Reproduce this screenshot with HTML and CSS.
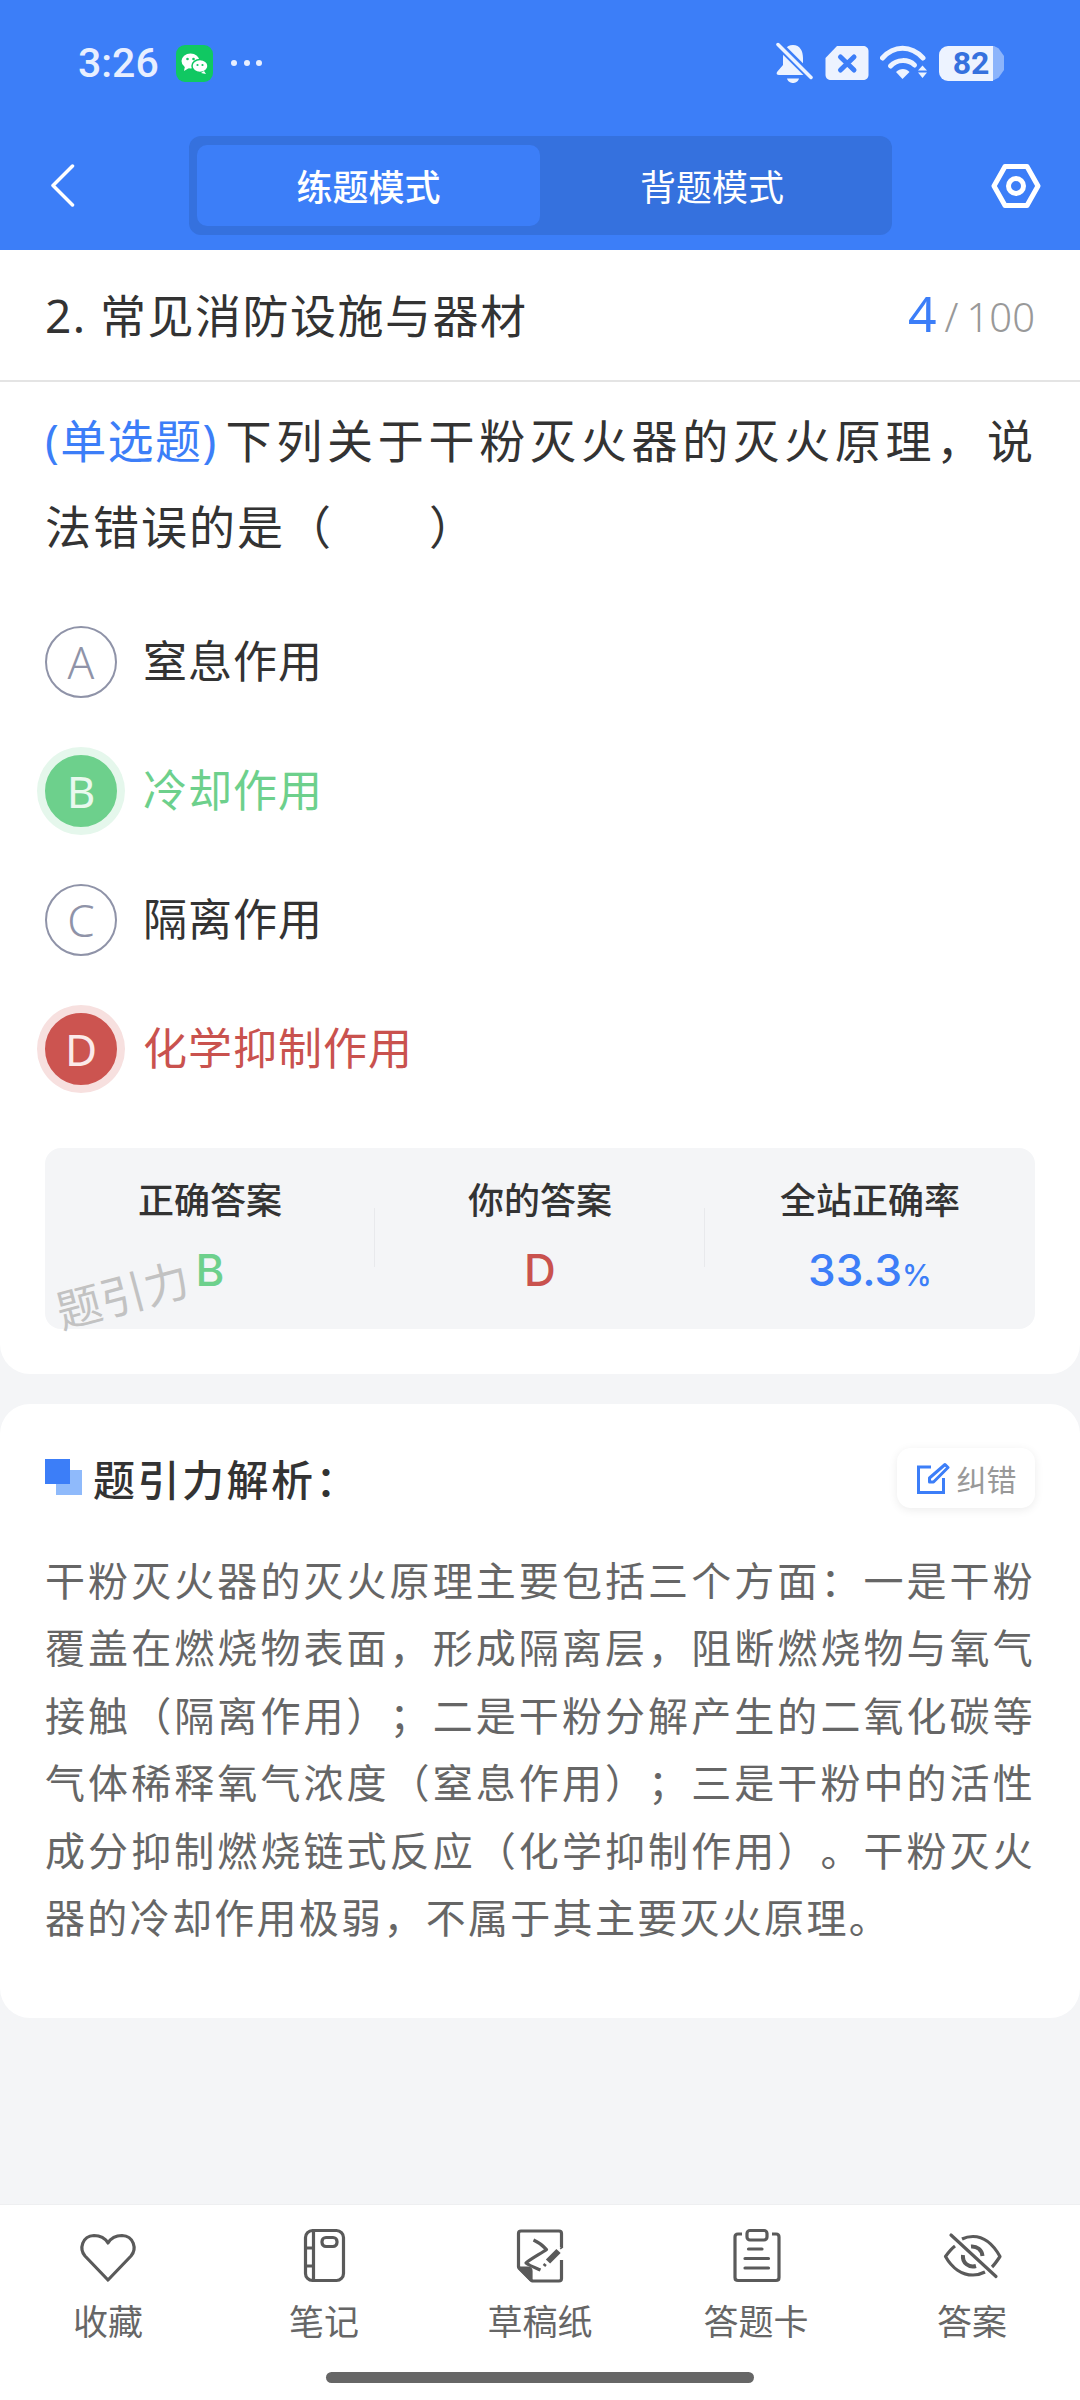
FILE: index.html
```html
<!DOCTYPE html>
<html>
<head>
    <meta charset="utf-8">
    <title>题引力</title>
    <link rel="stylesheet" href="styles.css">
</head>
<body>
    <header class="header">
        <div class="status">
            <div class="status-left">
                <span class="time">3:26</span>
                <svg class="wechat" width="37" height="37" viewBox="0 0 37 37">
                    <rect width="37" height="37" rx="9" fill="#10c862"/>
                    <ellipse cx="14.5" cy="16" rx="9" ry="7.5" fill="#fff"/>
                    <path d="M9 21l-1 5 5-3z" fill="#fff"/>
                    <ellipse cx="24" cy="21" rx="8" ry="6.5" fill="#fff" stroke="#10c862" stroke-width="1.5"/>
                    <path d="M28 26l2 3-5-1z" fill="#fff"/>
                    <circle cx="11.5" cy="14" r="1.3" fill="#10c862"/>
                    <circle cx="17.5" cy="14" r="1.3" fill="#10c862"/>
                    <circle cx="21.5" cy="20" r="1.1" fill="#10c862"/>
                    <circle cx="26.5" cy="20" r="1.1" fill="#10c862"/>
                </svg>
                <svg class="dots" width="34" height="8" viewBox="0 0 34 8">
                    <circle cx="4" cy="4" r="3" fill="#e8efff"/>
                    <circle cx="17" cy="4" r="3" fill="#e8efff"/>
                    <circle cx="29" cy="4" r="3" fill="#e8efff"/>
                </svg>
            </div>
            <div class="status-right">
                <svg width="38" height="42" viewBox="0 0 38 42">
                    <path d="M17 3C24 3 27 9 27 16V23L33 30C34 32 33 33 31 33H3C1 33 0 32 1 30L7 23V16C7 9 10 3 17 3Z" fill="#edf3ff"/>
                    <path d="M11 36.5H23C22 40 19 41 17 41S12 40 11 36.5Z" fill="#edf3ff"/>
                    <path d="M0 0L37 37" stroke="#3c7ef8" stroke-width="8"/>
                    <path d="M2 2.5L35 35.5" stroke="#edf3ff" stroke-width="3.5" stroke-linecap="round"/>
                </svg>
                <svg width="44" height="36" viewBox="0 0 44 36">
                    <path d="M12 1H38C41 1 43.500 3 43.500 6V30C43.500 33 41 35 38 35H6C3 35 .5 33 .5 30V13Z" fill="#edf3ff"/>
                    <path d="M15.500 12L29 25M29 12L15.500 25" stroke="#3c7ef8" stroke-width="5" stroke-linecap="round"/>
                </svg>
                <svg width="48" height="36" viewBox="0 0 48 36">
                    <path d="M2.500 13C14 0 31 0 43 13" fill="none" stroke="#edf3ff" stroke-width="5" stroke-linecap="round"/>
                    <path d="M10.500 21C17 14 28 14 34.500 20" fill="none" stroke="#edf3ff" stroke-width="5" stroke-linecap="round"/>
                    <path d="M16 27C20 23 26 23 29.500 27L22.500 34Z" fill="#edf3ff"/>
                    <path d="M42.500 20.500L47 25.500H38Z M38 27.500H47L42.500 33Z" fill="#edf3ff"/>
                </svg>
                <div class="battery"><span class="battery-level">82</span><span class="battery-tip"></span></div>
            </div>
        </div>
        <nav class="nav">
            <svg class="nav-back" width="25" height="43" viewBox="0 0 25 43">
                <path d="M22.500 2L3 21.500L22.500 41" fill="none" stroke="#fff" stroke-width="3.500" stroke-linecap="round" stroke-linejoin="round"/>
            </svg>
            <div class="mode-switch">
                <div class="mode active">练题模式</div>
                <div class="mode">背题模式</div>
            </div>
            <svg class="nav-settings" width="50" height="46" viewBox="0 0 50 46">
                <path d="M3 23L14 3.500H36L47 23L36 42.500H14Z" fill="none" stroke="#fff" stroke-width="5" stroke-linejoin="round"/>
                <circle cx="25" cy="23" r="7.500" fill="none" stroke="#fff" stroke-width="5"/>
            </svg>
        </nav>
    </header>

    <main class="content">
        <section class="card question-card">
            <div class="title-row">
                <div class="title">2. 常见消防设施与器材</div>
                <div class="progress"><span class="progress-now">4</span><span class="progress-slash">/</span>100</div>
            </div>

            <p class="question"><span class="question-type">(单选题)</span>下列关于干粉灭火器的灭火原理，说法错误的是（&emsp;&emsp;）</p>

            <div class="options">
                <div class="option">
                    <span class="letter">A</span>
                    <span class="option-text">窒息作用</span>
                </div>
                <div class="option right">
                    <span class="letter">B</span>
                    <span class="option-text">冷却作用</span>
                </div>
                <div class="option">
                    <span class="letter">C</span>
                    <span class="option-text">隔离作用</span>
                </div>
                <div class="option wrong">
                    <span class="letter">D</span>
                    <span class="option-text">化学抑制作用</span>
                </div>
            </div>

            <div class="stats">
                <div class="stat">
                    <div class="stat-label">正确答案</div>
                    <div class="stat-value green">B</div>
                </div>
                <div class="stat">
                    <div class="stat-label">你的答案</div>
                    <div class="stat-value red">D</div>
                </div>
                <div class="stat">
                    <div class="stat-label">全站正确率</div>
                    <div class="stat-value blue">33.3<small>%</small></div>
                </div>
                <div class="watermark">题引力</div>
            </div>
        </section>

        <section class="card analysis-card">
            <div class="analysis-head">
                <h2 class="analysis-title"><span class="analysis-mark"></span>题引力解析：</h2>
                <div class="correct-btn">
                    <svg width="34" height="34" viewBox="0 0 34 34">
                        <path d="M15 6H2.500V31.500H27.500V17" fill="none" stroke="#3c7ef8" stroke-width="3"/>
                        <path d="M29 3.500L32 6.500L17.500 21H13.500V17Z" fill="none" stroke="#3c7ef8" stroke-width="3" stroke-linejoin="round"/>
                    </svg>
                    <span>纠错</span>
                </div>
            </div>
            <p class="analysis-text">干粉灭火器的灭火原理主要包括三个方面：一是干粉覆盖在燃烧物表面，形成隔离层，阻断燃烧物与氧气接触（隔离作用）；二是干粉分解产生的二氧化碳等气体稀释氧气浓度（窒息作用）；三是干粉中的活性成分抑制燃烧链式反应（化学抑制作用）。干粉灭火器的冷却作用极弱，不属于其主要灭火原理。</p>
        </section>
    </main>

    <footer class="tabbar">
        <div class="tabs">
            <div class="tab">
                <svg class="tab-icon" viewBox="0 0 60 60">
                    <path d="M30 54L7 30C1 23 4 10 16 9.500C22 9.500 27 12 30 17C33 12 38 9.500 44 9.500C56 10 59 23 53 30Z"/>
                </svg>
                <span>收藏</span>
            </div>
            <div class="tab">
                <svg class="tab-icon" viewBox="0 0 60 60">
                    <rect x="11.500" y="4.500" width="38" height="50" rx="7"/>
                    <path d="M19.500 4.500V54.500M11.500 22H19.500M11.500 40H19.500"/>
                    <rect x="28" y="11.500" width="15" height="9" rx="4"/>
                </svg>
                <span>笔记</span>
            </div>
            <div class="tab">
                <svg class="tab-icon" viewBox="0 0 60 60">
                    <path d="M51.500 21V7.500C51.500 6 50.500 5 49 5H11C9.500 5 8.500 6 8.500 7.500V41L22 55H49C50.500 55 51.500 54 51.500 52.500V34"/>
                    <path d="M9 42H18C20 42 21 43 21 45V54Z" class="fill"/>
                    <path d="M23.500 14C28 16 33 19.500 36.500 23.500C32 27 22 32 16 37C20 40 26 42 30.500 44"/>
                    <path d="M48.500 25L38 35.500" stroke-width="6"/>
                    <path d="M35.500 38L34 40"/>
                    <path d="M51 21L52 22.500"/>
                </svg>
                <span>草稿纸</span>
            </div>
            <div class="tab">
                <svg class="tab-icon" viewBox="0 0 60 60">
                    <path d="M16 8H12C10 8 9 9.500 9 11V51.500C9 53.500 10 54.500 12 54.500H50C52 54.500 53 53.500 53 51.500V11C53 9.500 52 8 50 8H46"/>
                    <rect x="21" y="4.500" width="20" height="9.500" rx="3"/>
                    <path d="M22.500 23H36M19 32.500H42.500M19 42H42.500" stroke-linecap="round"/>
                </svg>
                <span>答题卡</span>
            </div>
            <div class="tab">
                <svg class="tab-icon" viewBox="0 0 60 60">
                    <path d="M9 9L54 50.500" stroke-linecap="round"/>
                    <path d="M13 20C9 23 6 27 3.500 30.500C10 42 20 49 31 49C36 49 39 48 43 46M20 13C23 11.500 27 10.500 31 10.500C42 10.500 51 18 58 30.500C55 35 53 38 50 41"/>
                    <path d="M21 29C20 37 27 42 34 40M29 20.500C35 20 40 24 40.500 30" stroke-width="4"/>
                </svg>
                <span>答案</span>
            </div>
        </div>
        <div class="home-bar"></div>
    </footer>
</body>
</html>
```

FILE: styles.css
```css
* {
    box-sizing: border-box;
}

body {
    margin: 0;
    width: 1080px;
    height: 2400px;
    display: flex;
    flex-direction: column;
    background-color: #f4f5f7;
    color: #333;
    font-family: "Noto Sans", "Noto Sans CJK SC", sans-serif;
    text-spacing-trim: space-all;
}

/* header */
.header {
    height: 250px;
    flex-shrink: 0;
    background-color: #3c7ef8;
    color: #fff;
}

.status {
    height: 136px;
    padding: 42px 76px 0 78px;
    display: flex;
    justify-content: space-between;
    align-items: flex-start;
}

.status-left {
    display: flex;
    align-items: center;
    height: 42px;
}

.time {
    font-family: Roboto, sans-serif;
    font-weight: 500;
    font-size: 41px;
    line-height: 42px;
    width: 98px;
    color: #e8efff;
}

.dots {
    margin-left: 17px;
}

.status-right {
    display: flex;
    align-items: center;
    gap: 11px;
    height: 42px;
}

.battery {
    display: flex;
    align-items: center;
    height: 35px;
}

.battery-level {
    width: 54px;
    height: 35px;
    padding-left: 10px;
    background-color: #edf3ff;
    border-radius: 9px 0 0 9px;
    color: #3571de;
    font-family: Roboto, sans-serif;
    font-weight: 700;
    font-size: 32px;
    line-height: 35px;
    text-align: center;
}

.battery-tip {
    width: 11px;
    height: 35px;
    background-color: #8cb4fb;
    border-radius: 0 9px 9px 0;
    clip-path: polygon(0 0, 50% 8%, 100% 30%, 100% 70%, 50% 92%, 0 100%);
}

.nav {
    height: 99px;
    display: grid;
    grid-template-columns: 189px 703px 1fr;
    align-items: center;
}

.nav-back {
    margin-left: 50px;
}

.nav-settings {
    justify-self: end;
    margin-right: 39px;
}

.mode-switch {
    height: 99px;
    padding: 9px 8px;
    display: grid;
    grid-template-columns: 343px 1fr;
    background-color: #3571de;
    border-radius: 12px;
}

.mode {
    display: flex;
    align-items: center;
    justify-content: center;
    border-radius: 10px;
    font-size: 36px;
}

.mode.active {
    background-color: #3c7ef8;
    font-weight: 500;
}

/* cards */
.content {
    flex: 1;
}

.card {
    background-color: #fff;
}

.question-card {
    padding-bottom: 45px;
    border-radius: 0 0 30px 30px;
}

.title-row {
    height: 132px;
    padding: 0 45px 4px;
    display: flex;
    justify-content: space-between;
    align-items: center;
    border-bottom: 2px solid #e4e4e4;
}

.title {
    font-size: 46px;
    letter-spacing: 1.500px;
}

.progress {
    font-size: 40px;
    color: #999;
    font-weight: 300;
}

.progress-now {
    font-size: 50px;
    color: #3c7ef8;
    font-weight: 400;
}

.progress-slash {
    margin: 0 8px;
}

.question {
    margin: 15px 0 0;
    padding: 0 45px;
    font-size: 46px;
    line-height: 86px;
    letter-spacing: 2px;
    text-align: justify;
}

.question-type {
    display: inline-block;
    margin-right: 5px;
    color: #3c7ef8;
    letter-spacing: 1.400px;
}

.options {
    margin-top: 28px;
}

.option {
    height: 129px;
    padding-left: 45px;
    display: flex;
    align-items: center;
    gap: 26px;
    font-size: 44px;
    letter-spacing: 1px;
}

.option-text {
    margin-top: -5px;
}

.letter {
    width: 72px;
    height: 72px;
    display: flex;
    align-items: center;
    justify-content: center;
    border: 2px solid #8f93a8;
    border-radius: 50%;
    color: #8f93a8;
    font-size: 44px;
    font-weight: 300;
    letter-spacing: 0;
}

.option.right {
    color: #6dd08c;
}

.option.right .letter {
    background-color: #6dd08c;
    border-color: #6dd08c;
    color: #e9f9ee;
    font-weight: 400;
    box-shadow: 0 0 0 8px #e5f7ec;
}

.option.wrong {
    color: #c9524e;
}

.option.wrong .letter {
    background-color: #cc5450;
    border-color: #cc5450;
    color: #fbeaea;
    font-weight: 400;
    box-shadow: 0 0 0 8px #f7e0df;
}

/* answer stats */
.stats {
    position: relative;
    height: 181px;
    margin: 35px 45px 0;
    display: grid;
    grid-template-columns: repeat(3, 1fr);
    background-color: #f4f5f7;
    border-radius: 16px;
}

.stat {
    position: relative;
    padding-top: 29px;
    text-align: center;
}

.stat + .stat::before {
    content: "";
    position: absolute;
    left: -1px;
    top: 60px;
    height: 59px;
    border-left: 1px solid #e8e9ec;
}

.stat-label {
    font-size: 36px;
    font-weight: 500;
    line-height: 48px;
}

.stat-value {
    margin-top: 18px;
    font-family: Inter, sans-serif;
    font-size: 44px;
    font-weight: 500;
    line-height: 54px;
}

.stat-value small {
    font-size: 30px;
}

.green {
    color: #6dd08c;
}

.red {
    color: #c9524e;
}

.blue {
    color: #3c7ef8;
}

.watermark {
    position: absolute;
    left: 10px;
    top: 120px;
    color: #c2c2c2;
    font-size: 45px;
    line-height: 54px;
    transform: rotate(-15deg);
}

/* analysis */
.analysis-card {
    margin-top: 30px;
    padding: 44px 45px 67px;
    border-radius: 30px;
}

.analysis-head {
    height: 60px;
    display: flex;
    justify-content: space-between;
    align-items: center;
}

.analysis-title {
    margin: -2px 0 0;
    display: flex;
    align-items: center;
    font-size: 42px;
    font-weight: 500;
    letter-spacing: 2.500px;
}

.analysis-mark {
    position: relative;
    width: 37px;
    height: 36px;
    margin-right: 11px;
    background: linear-gradient(#8fbafb, #8fbafb) no-repeat 11px 11px / 26px 25px;
}

.analysis-mark::before {
    content: "";
    position: absolute;
    left: 0;
    top: 0;
    width: 25px;
    height: 25px;
    background-color: #3c7ef8;
}

.correct-btn {
    width: 138px;
    height: 60px;
    display: flex;
    align-items: center;
    justify-content: center;
    gap: 7px;
    background-color: #fff;
    border-radius: 14px;
    box-shadow: 0 2px 10px rgba(0, 0, 0, 0.08);
    color: #999;
    font-size: 30px;
}

.analysis-text {
    margin: 39px 0 0;
    color: #666;
    font-size: 40px;
    line-height: 67.400px;
    letter-spacing: 2.300px;
    text-align: justify;
}

/* bottom bar */
.tabbar {
    height: 196px;
    flex-shrink: 0;
    background-color: #fff;
    border-top: 1px solid #eeeff1;
}

.tabs {
    display: grid;
    grid-template-columns: repeat(5, 216px);
    padding-top: 21px;
}

.tab {
    display: flex;
    flex-direction: column;
    align-items: center;
    color: #666;
    font-size: 35px;
    line-height: 48px;
}

.tab-icon {
    width: 60px;
    height: 60px;
    margin-bottom: 12px;
    fill: none;
    stroke: #5a5a5a;
    stroke-width: 3.200px;
    stroke-linejoin: round;
}

.tab-icon .fill {
    fill: #5a5a5a;
}

.home-bar {
    width: 428px;
    height: 11px;
    margin: 26px auto 0;
    background-color: #666;
    border-radius: 6px;
}
```
